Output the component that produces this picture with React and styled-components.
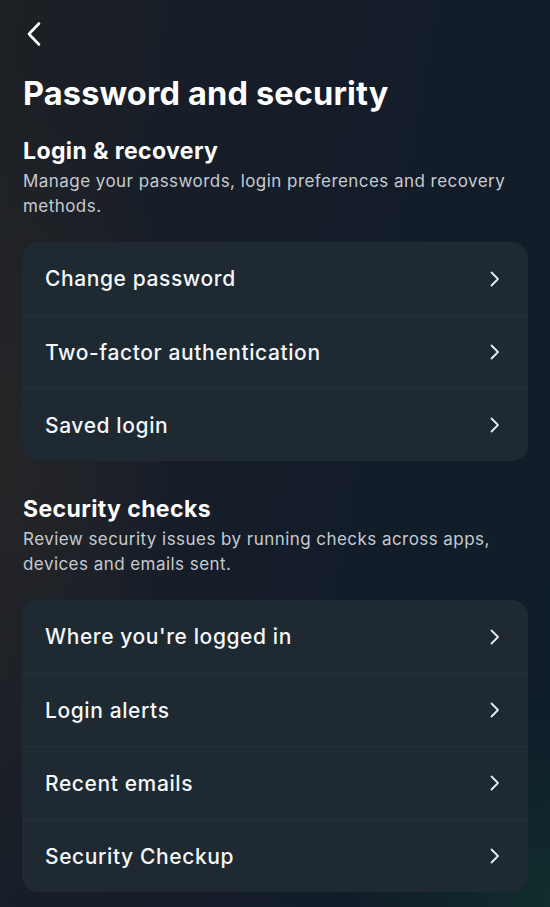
import React from "react";
import styled, { createGlobalStyle } from "styled-components";

const Global = createGlobalStyle`
  html, body { margin: 0; padding: 0; }
  body {
    width: 550px;
    min-height: 907px;
    background: #131b27;
    font-family: Inter, "Noto Sans", "Liberation Sans", sans-serif;
    -webkit-font-smoothing: antialiased;
  }
`;

const Screen = styled.div`
  width: 550px;
  height: 907px;
  overflow: hidden;
  box-sizing: border-box;
  padding: 20px 22px 0 22px;
  color: #f2f4f5;
  background:
    radial-gradient(ellipse 300px 260px at 560px 900px, rgba(18, 60, 48, 0.5), transparent 70%),
    radial-gradient(ellipse 260px 520px at 0px 450px, rgba(42, 40, 40, 0.7), transparent 75%),
    linear-gradient(100deg, #1d2024 0%, #161d29 35%, #131c29 65%, #0f1e2a 100%);
  display: flex;
  flex-direction: column;
`;

const BackButton = styled.button`
  width: 28px;
  height: 28px;
  padding: 0;
  margin: 0 0 0 3px;
  border: 0;
  background: transparent;
  color: #ffffff;
  display: flex;
  align-items: center;
  justify-content: flex-start;
`;

const Title = styled.h1`
  margin: 26px 0 0 1px;
  font-size: 32.5px;
  font-weight: 700;
  line-height: 40px;
  letter-spacing: 0.15px;
  color: #ffffff;
`;

const Section = styled.section`
  display: flex;
  flex-direction: column;
  margin-top: ${(p) => p.$top}px;
`;

const SectionTitle = styled.h2`
  margin: 0 0 0 1px;
  font-size: 23px;
  font-weight: 700;
  line-height: 28px;
  letter-spacing: 0.4px;
  color: #ffffff;
`;

const SectionDesc = styled.p`
  margin: 4px 0 0 1px;
  font-size: 17px;
  font-weight: 400;
  line-height: 25px;
  letter-spacing: 0.45px;
  color: #c5cbd1;
`;

const Card = styled.div`
  margin-top: 23px;
  background: #1e2932;
  border-radius: 16px;
  display: flex;
  flex-direction: column;
  overflow: hidden;
`;

const Row = styled.div`
  height: 73px;
  box-sizing: border-box;
  padding: 0 26px 0 23px;
  display: flex;
  align-items: center;
  justify-content: space-between;
  border-top: ${(p) => (p.$first ? "0" : "1px solid #263139")};
`;

const RowLabel = styled.span`
  font-size: 21px;
  font-weight: 500;
  color: #f5f7f8;
  letter-spacing: 0.6px;
`;

const Chevron = () => (
  <svg width="14" height="18" viewBox="0 0 14 18" fill="none">
    <path d="M3.5 2.5 L10 9 L3.5 15.5" stroke="#e8ecef" strokeWidth="1.8" strokeLinecap="round" strokeLinejoin="round" />
  </svg>
);

const BackIcon = () => (
  <svg width="18" height="26" viewBox="0 0 18 26" fill="none">
    <path d="M14 2.5 L4 13 L14 23.5" stroke="#ffffff" strokeWidth="2.6" strokeLinecap="round" strokeLinejoin="round" />
  </svg>
);

const sections = [
  {
    title: "Login & recovery",
    desc: "Manage your passwords, login preferences and recovery methods.",
    items: ["Change password", "Two-factor authentication", "Saved login"],
    top: 23,
  },
  {
    title: "Security checks",
    desc: "Review security issues by running checks across apps, devices and emails sent.",
    items: ["Where you're logged in", "Login alerts", "Recent emails", "Security Checkup"],
    top: 34,
  },
];

export default function App() {
  return (
    <>
      <Global />
      <Screen>
        <BackButton aria-label="Back">
          <BackIcon />
        </BackButton>
        <Title>Password and security</Title>
        {sections.map((s) => (
          <Section key={s.title} $top={s.top}>
            <SectionTitle>{s.title}</SectionTitle>
            <SectionDesc>{s.desc}</SectionDesc>
            <Card>
              {s.items.map((it, i) => (
                <Row key={it} $first={i === 0}>
                  <RowLabel>{it}</RowLabel>
                  <Chevron />
                </Row>
              ))}
            </Card>
          </Section>
        ))}
      </Screen>
    </>
  );
}
